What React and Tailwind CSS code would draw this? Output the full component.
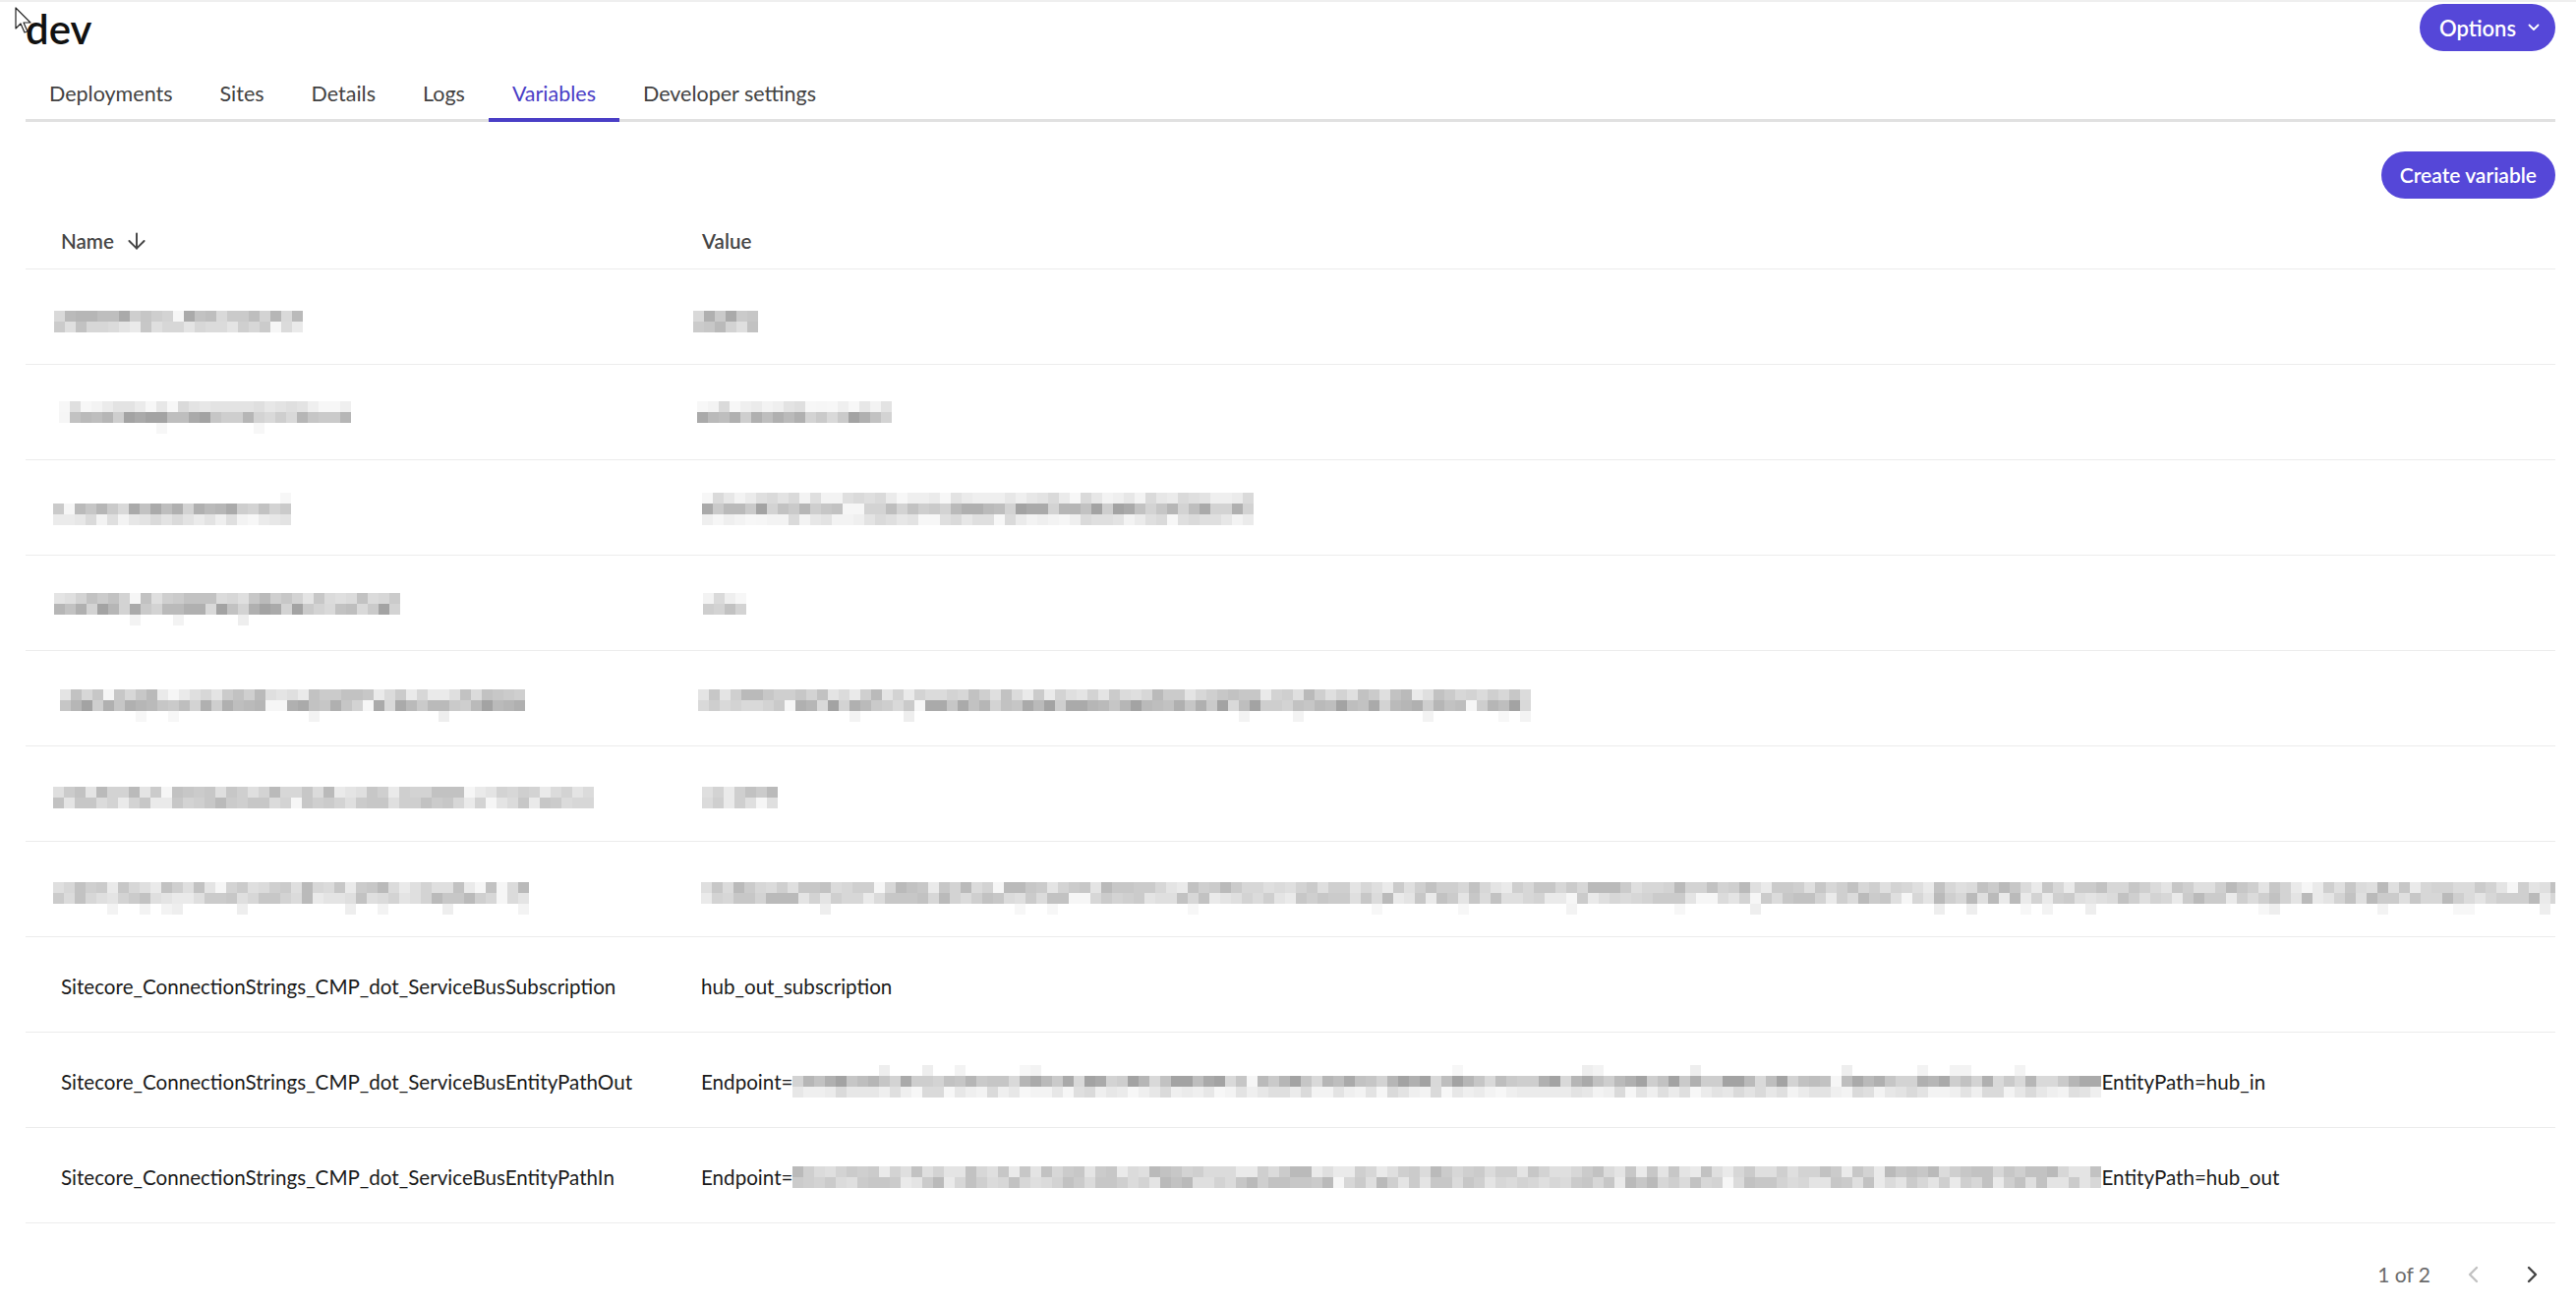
import React from 'react'
import { ArrowDown } from 'lucide-react'

// grey palettes used for the pixelated (redacted) values
const palettes = {
  dark: [
    'bg-[#a3a3a3]', 'bg-[#aaaaaa]', 'bg-[#b0b0b0]', 'bg-[#b6b6b6]', 'bg-[#bababa]', 'bg-[#bebebe]',
    'bg-[#c2c2c2]', 'bg-[#c6c6c6]', 'bg-[#cacaca]', 'bg-[#cecece]', 'bg-[#d3d3d3]', 'bg-[#d9d9d9]',
  ],
  mid: [
    'bg-[#bababa]', 'bg-[#c2c2c2]', 'bg-[#c7c7c7]', 'bg-[#cbcbcb]', 'bg-[#cfcfcf]', 'bg-[#d3d3d3]',
    'bg-[#d7d7d7]', 'bg-[#dbdbdb]', 'bg-[#dfdfdf]', 'bg-[#e4e4e4]', 'bg-[#eaeaea]',
  ],
  light: [
    'bg-[#dadada]', 'bg-[#dfdfdf]', 'bg-[#e3e3e3]', 'bg-[#e7e7e7]', 'bg-[#ebebeb]', 'bg-[#efefef]',
    'bg-[#f3f3f3]', 'bg-[#f7f7f7]',
  ],
  sparse: ['bg-[#eeeeee]', 'bg-[#f3f3f3]', 'bg-[#f7f7f7]'],
}

function makeRng(seed) {
  let s = seed * 9301 + 49297
  return () => {
    s = (s * 1103515245 + 12345) % 2147483648
    return s / 2147483648
  }
}

function Mosaic({ n, rows, seed, dx = 0, dy = 0 }) {
  const rand = makeRng(seed)
  return (
    <div className="flex shrink-0 flex-col" style={{ marginLeft: dx, marginTop: dy }}>
      {rows.map((kind, r) => (
        <div key={r} className="flex">
          {Array.from({ length: n }).map((_, i) => {
            const v = rand()
            let cls = 'bg-transparent'
            if (kind === 'sparse') {
              if (v < 0.12) cls = palettes.sparse[Math.floor(rand() * palettes.sparse.length)]
            } else if (v < 0.025) {
              cls = 'bg-[#f6f6f6]'
            } else {
              const p = palettes[kind]
              cls = p[Math.floor(rand() * p.length)]
            }
            return <div key={i} className={`h-[11px] w-[11px] ${cls}`} />
          })}
        </div>
      ))}
    </div>
  )
}

const hidden = [
  {
    name: { n: 23, dx: -7, dy: 42, rows: ['dark', 'mid'] },
    value: { n: 6, dx: -8, dy: 42, rows: ['dark', 'mid'] },
  },
  {
    name: { n: 27, dx: -2, dy: 37, rows: ['light', 'dark', 'sparse'] },
    value: { n: 18, dx: -4, dy: 37, rows: ['light', 'dark'] },
  },
  {
    name: { n: 22, dx: -8, dy: 33, rows: ['sparse', 'dark', 'light'] },
    value: { n: 51, dx: 1, dy: 33, rows: ['light', 'dark', 'light'] },
  },
  {
    name: { n: 32, dx: -7, dy: 38, rows: ['mid', 'dark', 'sparse'] },
    value: { n: 4, dx: 2, dy: 38, rows: ['light', 'dark'] },
  },
  {
    name: { n: 43, dx: -1, dy: 39, rows: ['mid', 'dark', 'sparse'] },
    value: { n: 77, dx: -3, dy: 39, rows: ['mid', 'dark', 'sparse'] },
  },
  {
    name: { n: 50, dx: -8, dy: 41, rows: ['mid', 'mid'] },
    value: { n: 7, dx: 1, dy: 41, rows: ['mid', 'mid'] },
  },
  {
    name: { n: 44, dx: -8, dy: 41, rows: ['mid', 'mid', 'sparse'] },
    value: { n: 172, dx: 0, dy: 41, rows: ['mid', 'mid', 'sparse'] },
  },
]

const tabs = ['Deployments', 'Sites', 'Details', 'Logs', 'Variables', 'Developer settings']

function ChevronSmall({ dir, className }) {
  return (
    <svg viewBox="0 0 14 20" className={className} fill="none" stroke="currentColor" strokeWidth="2.4" strokeLinecap="round" strokeLinejoin="round">
      {dir === 'left' ? <polyline points="11,3 4,10 11,17" /> : <polyline points="3,3 10,10 3,17" />}
    </svg>
  )
}

function Cursor() {
  return (
    <svg viewBox="0 0 18 28" className="absolute left-[15px] top-[5px] h-[28px] w-[18px]">
      <path d="M1 1 L1 22 L6 17 L10 26 L13 25 L9 16 L16 16 Z" fill="white" stroke="#222" strokeWidth="1.2" strokeLinejoin="round" />
    </svg>
  )
}

function Row({ children }) {
  return (
    <div className="grid h-[97px] grid-cols-[652px_1fr] overflow-hidden border-b border-[#ececec]">
      {children}
    </div>
  )
}

export default function App() {
  return (
    <div className="relative min-h-screen border-t-2 border-[#efefef] bg-white pl-[26px] pr-[21px] font-['Lato','Noto_Sans',sans-serif] text-[#1b1b1b]">
      <Cursor />

      <div className="flex h-[52px] items-start justify-between">
        <h1 className="mt-[2px] text-[42px] leading-[50px] font-semibold text-[#111]">dev</h1>
        <button className="mt-[2px] flex h-[48px] w-[138px] items-center justify-center gap-[12px] rounded-full bg-[#5547d8] pl-[4px] text-[22px] font-semibold text-white">
          Options
          <svg viewBox="0 0 12 8" className="h-[8px] w-[12px]" fill="none" stroke="currentColor" strokeWidth="1.8" strokeLinecap="round" strokeLinejoin="round">
            <polyline points="1.5,1.5 6,6 10.5,1.5" />
          </svg>
        </button>
      </div>

      <div className="mt-[18px] flex border-b-[3px] border-[#e1e1e1]">
        {tabs.map((t) => (
          <div
            key={t}
            className={
              t === 'Variables'
                ? 'relative flex h-[49px] items-center px-[24px] pb-[2px] text-[21.5px] text-[#4a3ec6]'
                : 'relative flex h-[49px] items-center px-[24px] pb-[2px] text-[21.5px] text-[#424242]'
            }
          >
            {t}
            {t === 'Variables' && <div className="absolute -bottom-[3px] left-0 right-0 h-[4px] bg-[#4a3ec6]" />}
          </div>
        ))}
      </div>

      <div className="mt-[30px] flex justify-end">
        <button className="h-[48px] rounded-full bg-[#5547d8] px-[19px] text-[21px] font-semibold text-white">
          Create variable
        </button>
      </div>

      <div className="text-[20.6px]">
        <div className="grid h-[72px] grid-cols-[652px_1fr] border-b border-[#ececec] pt-[15px] font-semibold text-[#454545]">
          <div className="flex items-center pl-[36px]">
            Name
            <ArrowDown className="ml-[10px] h-[26px] w-[26px]" strokeWidth={1.8} />
          </div>
          <div className="flex items-center pl-[36px]">Value</div>
        </div>

        {hidden.map((h, i) => (
          <Row key={i}>
            <div className="pl-[36px]">
              <Mosaic {...h.name} seed={i * 2 + 3} />
            </div>
            <div className="pl-[35px]">
              <Mosaic {...h.value} seed={i * 2 + 4} />
            </div>
          </Row>
        ))}

        <Row>
          <div className="flex items-center pl-[36px] pt-[4px]">Sitecore_ConnectionStrings_CMP_dot_ServiceBusSubscription</div>
          <div className="flex items-center pl-[35px] pt-[4px]">hub_out_subscription</div>
        </Row>
        <Row>
          <div className="flex items-center pl-[36px] pt-[4px]">Sitecore_ConnectionStrings_CMP_dot_ServiceBusEntityPathOut</div>
          <div className="flex items-center pl-[35px] pt-[4px]">
            Endpoint=
            <Mosaic n={121} rows={['sparse', 'dark', 'light']} seed={41} dy={-2} />
            EntityPath=hub_in
          </div>
        </Row>
        <Row>
          <div className="flex items-center pl-[36px] pt-[4px]">Sitecore_ConnectionStrings_CMP_dot_ServiceBusEntityPathIn</div>
          <div className="flex items-center pl-[35px] pt-[4px]">
            Endpoint=
            <Mosaic n={121} rows={['mid', 'mid']} seed={57} dy={0} />
            EntityPath=hub_out
          </div>
        </Row>
      </div>

      <div className="flex h-[85px] items-center justify-end gap-[25px] pr-[5px] pt-[18px]">
        <span className="text-[21px] text-[#6b6b6b]">1 of 2</span>
        <button className="flex h-[36px] w-[36px] items-center justify-center text-[#c2c2c2]">
          <ChevronSmall dir="left" className="h-[20px] w-[14px]" />
        </button>
        <button className="flex h-[36px] w-[36px] items-center justify-center text-[#444]">
          <ChevronSmall dir="right" className="h-[20px] w-[14px]" />
        </button>
      </div>
    </div>
  )
}
